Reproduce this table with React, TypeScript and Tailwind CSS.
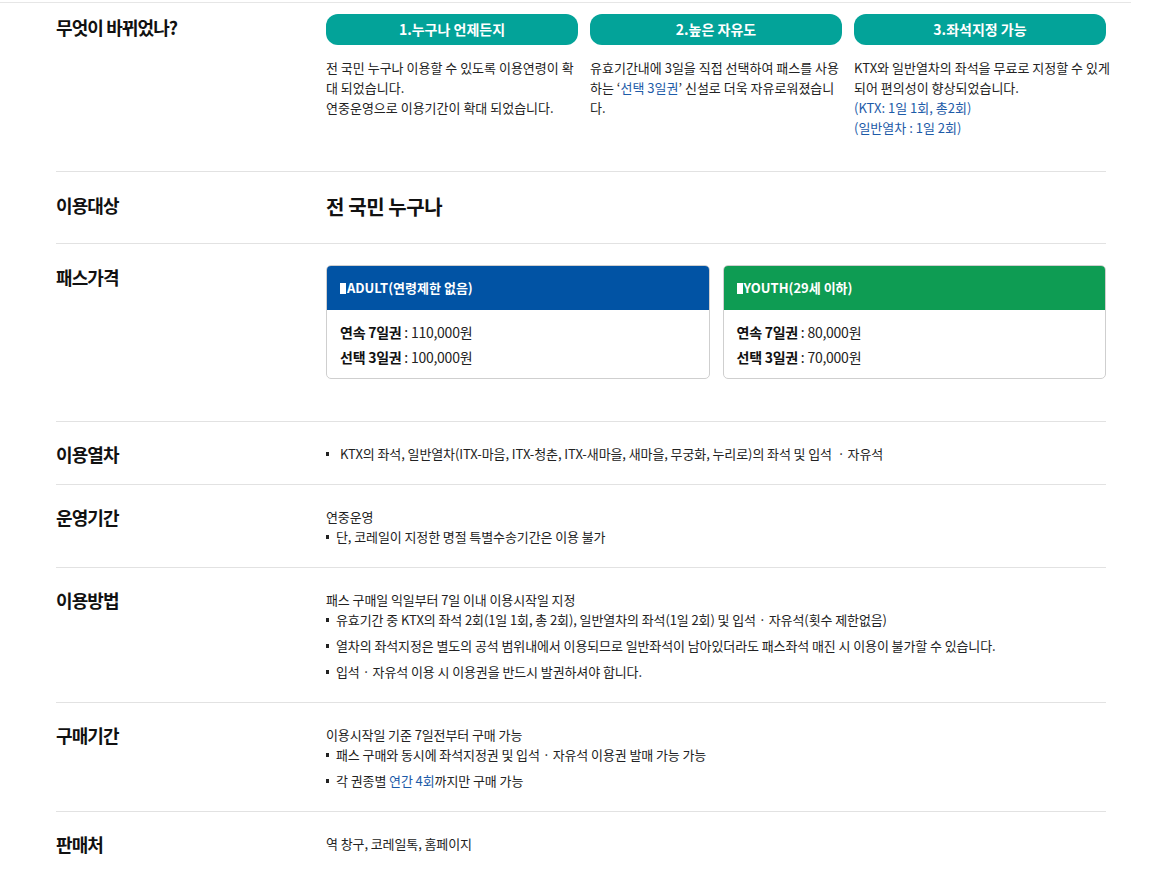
import React from 'react';

const FONT = "font-['Noto_Sans_CJK_KR','Noto_Sans',sans-serif]";

const FEATURES = [
  {
    title: '1.누구나 언제든지',
    lines: [
      <>전 국민 누구나 이용할 수 있도록 이용연령이 확</>,
      <>대 되었습니다.</>,
      <>연중운영으로 이용기간이 확대 되었습니다.</>,
    ],
  },
  {
    title: '2.높은 자유도',
    lines: [
      <>유효기간내에 3일을 직접 선택하여 패스를 사용</>,
      <>
        하는 ‘<span className="text-[#1d5ba8]">선택 3일권</span>’ 신설로 더욱 자유로워졌습니
      </>,
      <>다.</>,
    ],
  },
  {
    title: '3.좌석지정 가능',
    lines: [
      <>KTX와 일반열차의 좌석을 무료로 지정할 수 있게</>,
      <>되어 편의성이 향상되었습니다.</>,
      <span className="text-[#1d5ba8]">(KTX: 1일 1회, 총2회)</span>,
      <span className="text-[#1d5ba8]">(일반열차 : 1일 2회)</span>,
    ],
  },
];

const PASSES = [
  { name: 'ADULT(연령제한 없음)', color: 'bg-[#0153a4]', week: '110,000원', pick: '100,000원' },
  { name: 'YOUTH(29세 이하)', color: 'bg-[#0e9c53]', week: '80,000원', pick: '70,000원' },
];

function Label({ children, tall }: { children: React.ReactNode; tall?: boolean }) {
  return (
    <h3
      className={`w-[270px] shrink-0 text-[18px] font-bold tracking-[-0.9px] text-[#111] ${
        tall ? 'leading-[24px]' : 'leading-[20px]'
      }`}
    >
      {children}
    </h3>
  );
}

function Bullet({ children, first, wide }: { children: React.ReactNode; first?: boolean; wide?: boolean }) {
  return (
    <li className={`flex items-center ${first ? '' : 'mt-[6px]'}`}>
      <span className={`h-[4px] w-[3px] shrink-0 bg-[#222] ${wide ? 'mr-[11px]' : 'mr-[7px]'}`} />
      <span>{children}</span>
    </li>
  );
}

function Row({ label, children }: { label: string; children: React.ReactNode }) {
  return (
    <section className="flex border-b border-[#e2e2e2] pt-[22px] pb-[20px]">
      <Label>{label}</Label>
      <div className="w-[780px] whitespace-nowrap text-[13px] leading-[20px] tracking-[-0.1px] text-[#222]">
        {children}
      </div>
    </section>
  );
}

export default function App() {
  return (
    <div className={`min-h-screen bg-white pt-[2px] text-[#222] ${FONT}`}>
      <div className="h-px w-[1131px] bg-[#e6e6e6]" />
      <div className="ml-[56px] w-[1050px]">
        {/* what changed */}
        <section className="flex border-b border-[#e2e2e2] pt-[11px] pb-[33px]">
          <div className="pt-[1px]">
            <Label tall>무엇이 바뀌었나?</Label>
          </div>
          <div className="grid w-[780px] grid-cols-3 gap-x-[12px]">
            {FEATURES.map((f) => (
              <div key={f.title}>
                <div className="flex h-[31px] items-center justify-center rounded-[12px] bg-[#03a399] text-[14px] font-bold text-white">
                  {f.title}
                </div>
                <div className="mt-[13px] whitespace-nowrap text-[13px] leading-[20px] text-[#222]">
                  {f.lines.map((l, i) => (
                    <div key={i}>{l}</div>
                  ))}
                </div>
              </div>
            ))}
          </div>
        </section>

        {/* target */}
        <section className="flex border-b border-[#e2e2e2] pt-[21px] pb-[22px]">
          <Label tall>이용대상</Label>
          <p className="text-[20px] font-bold leading-[28px] tracking-[-0.4px] text-[#111]">전 국민 누구나</p>
        </section>

        {/* price */}
        <section className="flex border-b border-[#e2e2e2] pt-[21px] pb-[42px]">
          <Label tall>패스가격</Label>
          <div className="grid w-[780px] grid-cols-2 gap-x-[13px]">
            {PASSES.map((p) => (
              <div key={p.name} className="overflow-hidden rounded-[5px] border border-[#cfcfcf]">
                <div className={`flex h-[44px] items-center px-[13px] text-[13px] font-bold text-white ${p.color}`}>
                  <span className="mr-[1px] h-[11px] w-[6px] bg-white" />
                  {p.name}
                </div>
                <div className="px-[13px] pt-[10px] pb-[8px] text-[14px] leading-[25px] tracking-[-0.25px] text-[#222]">
                  <p>
                    <b className="text-[#111]">연속 7일권</b> : {p.week}
                  </p>
                  <p>
                    <b className="text-[#111]">선택 3일권</b> : {p.pick}
                  </p>
                </div>
              </div>
            ))}
          </div>
        </section>

        <Row label="이용열차">
          <ul>
            <Bullet first wide>
              KTX의 좌석, 일반열차(ITX-마음, ITX-청춘, ITX-새마을, 새마을, 무궁화, 누리로)의 좌석 및 입석&nbsp;&nbsp;· 자유석
            </Bullet>
          </ul>
        </Row>

        <Row label="운영기간">
          <p>연중운영</p>
          <ul>
            <Bullet first>단, 코레일이 지정한 명절 특별수송기간은 이용 불가</Bullet>
          </ul>
        </Row>

        <Row label="이용방법">
          <p>패스 구매일 익일부터 7일 이내 이용시작일 지정</p>
          <ul>
            <Bullet first>유효기간 중 KTX의 좌석 2회(1일 1회, 총 2회), 일반열차의 좌석(1일 2회) 및 입석 · 자유석(횟수 제한없음)</Bullet>
            <Bullet>열차의 좌석지정은 별도의 공석 범위내에서 이용되므로 일반좌석이 남아있더라도 패스좌석 매진 시 이용이 불가할 수 있습니다.</Bullet>
            <Bullet>입석 · 자유석 이용 시 이용권을 반드시 발권하셔야 합니다.</Bullet>
          </ul>
        </Row>

        <Row label="구매기간">
          <p>이용시작일 기준 7일전부터 구매 가능</p>
          <ul>
            <Bullet first>패스 구매와 동시에 좌석지정권 및 입석 · 자유석 이용권 발매 가능 가능</Bullet>
            <Bullet>
              각 권종별 <span className="text-[#1d5ba8]">연간 4회</span>까지만 구매 가능
            </Bullet>
          </ul>
        </Row>

        <section className="flex pt-[22px] pb-[20px]">
          <Label>판매처</Label>
          <p className="text-[13px] leading-[20px] tracking-[-0.1px] text-[#222]">역 창구, 코레일톡, 홈페이지</p>
        </section>
      </div>
    </div>
  );
}
